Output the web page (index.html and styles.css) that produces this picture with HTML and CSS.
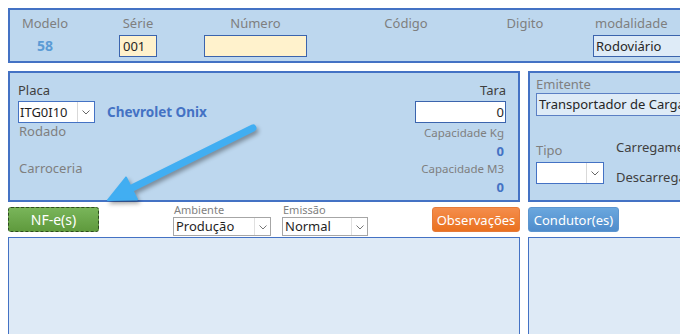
FILE: index.html
```html
<!DOCTYPE html>
<html lang="pt">
<head>
<meta charset="utf-8">
<title>MDF-e</title>
<link rel="stylesheet" href="styles.css">
</head>
<body>
<div class="page">
  <div class="panel top">
    <div class="f f-modelo"><span class="lbl">Modelo</span><span class="val58">58</span></div>
    <div class="f f-serie"><span class="lbl">Série</span><div class="box yellow w-serie">001</div></div>
    <div class="f f-numero"><span class="lbl">Número</span><div class="box yellow w-numero"></div></div>
    <div class="f f-codigo"><span class="lbl">Código</span></div>
    <div class="f f-digito"><span class="lbl">Digito</span></div>
    <div class="f f-modal"><span class="lbl lbl-modal">modalidade</span><div class="box pale w-modal">Rodoviário</div></div>
  </div>

  <div class="mid">
    <div class="panel veh">
      <div class="vleft">
        <span class="dark line">Placa</span>
        <div class="placa-row">
          <div class="sel w-placa"><span class="sel-txt">ITG0I10</span><span class="drop"><svg width="8" height="5" viewBox="0 0 8 5"><polyline points="0.5,0.5 4,4 7.5,0.5" fill="none" stroke="#666" stroke-width="1"/></svg></span></div>
          <span class="car">Chevrolet Onix</span>
        </div>
        <span class="gray line">Rodado</span>
        <span class="gray line carroceria">Carroceria</span>
      </div>
      <div class="vright">
        <span class="dark line">Tara</span>
        <div class="box white w-tara">0</div>
        <span class="gray line2 capkg">Capacidade Kg</span>
        <span class="num line2">0</span>
        <span class="gray line2">Capacidade M3</span>
        <span class="num line2">0</span>
      </div>
    </div>
    <div class="panel emit">
      <span class="gray line">Emitente</span>
      <div class="box pale w-emit">Transportador de Carga</div>
      <div class="emit-low">
        <div class="tipo">
          <span class="gray line">Tipo</span>
          <div class="sel w-tipo"><span class="sel-txt"></span><span class="drop"><svg width="8" height="5" viewBox="0 0 8 5"><polyline points="0.5,0.5 4,4 7.5,0.5" fill="none" stroke="#666" stroke-width="1"/></svg></span></div>
        </div>
        <div class="checks">
          <span class="dark line">Carregamento</span>
          <span class="dark line desc">Descarregamento</span>
        </div>
      </div>
    </div>
  </div>

  <div class="actions">
    <div class="btn green">NF-e(s)</div>
    <div class="grp g-amb">
      <span class="small">Ambiente</span>
      <div class="sel2"><span class="sel-txt">Produção</span><span class="drop2"><svg width="8" height="5" viewBox="0 0 8 5"><polyline points="0.5,0.5 4,4 7.5,0.5" fill="none" stroke="#777" stroke-width="1"/></svg></span></div>
    </div>
    <div class="grp g-emi">
      <span class="small">Emissão</span>
      <div class="sel2"><span class="sel-txt">Normal</span><span class="drop2"><svg width="8" height="5" viewBox="0 0 8 5"><polyline points="0.5,0.5 4,4 7.5,0.5" fill="none" stroke="#777" stroke-width="1"/></svg></span></div>
    </div>
    <div class="btn orange">Observações</div>
    <div class="btn blue">Condutor(es)</div>
  </div>

  <div class="bottom">
    <div class="bpanel bl"></div>
    <div class="bpanel br"></div>
  </div>
</div>

<svg class="arrow" width="680" height="334" viewBox="0 0 680 334">
  <g class="arrow-g">
    <line x1="253" y1="128" x2="133" y2="187.5" stroke="#41aef2" stroke-width="7" stroke-linecap="round"/>
    <polygon points="108,200 137,199.5 126,177.5" fill="#41aef2" stroke="#41aef2" stroke-width="2" stroke-linejoin="round"/>
  </g>
</svg>
</body>
</html>
```

FILE: styles.css
```css
html, body {
  margin: 0;
  padding: 0;
}
body {
  width: 680px;
  height: 334px;
  overflow: hidden;
  background: #ffffff;
  font-family: "Noto Sans", "Open Sans", sans-serif;
  font-size: 13px;
  color: #262626;
  position: relative;
}
.page {
  width: 800px;
  padding: 8px 0 0 8px;
  display: flex;
  flex-direction: column;
}
.panel {
  box-sizing: border-box;
  border: 2px solid #4472c4;
  background: #bdd7ee;
}

/* ---------- top panel ---------- */
.top {
  width: 760px;
  height: 55px;
  display: flex;
  padding: 5px 0 0 4px;
}
.f {
  display: flex;
  flex-direction: column;
  align-items: center;
}
.lbl {
  color: #7f7f7f;
  line-height: 16px;
  height: 16px;
  margin-bottom: 4px;
}
.f-modelo { width: 62px; }
.f-serie { width: 56px; margin-left: 34px; }
.f-numero { width: 103px; margin-left: 38px; }
.f-codigo { width: 72px; margin-left: 63px; }
.f-digito { width: 70px; margin-left: 48px; }
.f-modal { width: 130px; margin-left: 33px; align-items: flex-start; }
.lbl-modal { margin-left: 2px; }
.val58 {
  color: #5b9bd5;
  font-weight: bold;
  font-size: 14px;
  line-height: 22px;
}
.box {
  box-sizing: border-box;
  height: 22px;
  border: 1px solid #3b64ad;
  line-height: 20px;
  padding: 0 3px;
  color: #262626;
  white-space: nowrap;
  overflow: hidden;
}
.yellow { background: #fff2cc; }
.pale { background: #deebf7; padding-left: 2px; }
.white { background: #ffffff; }
.w-serie { width: 38px; }
.w-numero { width: 103px; }
.w-modal { width: 110px; }

/* ---------- middle row ---------- */
.mid {
  display: flex;
  gap: 8px;
  margin-top: 8px;
  height: 131px;
}
.veh {
  width: 512px;
  display: flex;
  justify-content: space-between;
  padding: 9px 12px 0 8px;
}
.vleft, .vright {
  display: flex;
  flex-direction: column;
}
.vright { align-items: flex-end; }
.line {
  line-height: 16px;
  height: 16px;
  white-space: nowrap;
}
.line2 {
  line-height: 18px;
  height: 18px;
  white-space: nowrap;
  margin-right: 2px;
}
.line2.gray { font-size: 11.5px; }
.capkg { margin-top: 1px; }
.dark { color: #404040; }
.gray { color: #7f7f7f; }
.num { color: #4472c4; font-weight: bold; }
.placa-row {
  display: flex;
  align-items: center;
  margin-top: 3px;
}
.sel {
  box-sizing: border-box;
  height: 22px;
  border: 1px solid #4472c4;
  background: #ffffff;
  display: flex;
  justify-content: space-between;
  align-items: stretch;
}
.sel-txt {
  line-height: 20px;
  padding-left: 1px;
  color: #1f1f1f;
  white-space: nowrap;
}
.drop {
  width: 16px;
  border-left: 1px solid #d9d9d9;
  display: flex;
  align-items: center;
  justify-content: center;
}
.w-placa { width: 77px; }
.car {
  margin-left: 12px;
  color: #4472c4;
  font-weight: bold;
  font-size: 13.5px;
}
.vleft > .gray.line { padding-left: 1px; }
.carroceria { margin-top: 21px; }
.w-tara {
  width: 91px;
  margin-top: 3px;
  text-align: right;
  padding-right: 1px;
}

.emit {
  width: 200px;
  padding: 3px 0 0 6px;
  display: flex;
  flex-direction: column;
}
.w-emit {
  width: 200px;
  height: 23px;
  margin-top: 1px;
  border-color: #5b7fc4;
}
.emit-low {
  display: flex;
  margin-top: 23px;
}
.tipo {
  display: flex;
  flex-direction: column;
  padding-top: 3px;
}
.tipo .line { margin-bottom: 4px; }
.w-tipo { width: 68px; }
.checks {
  display: flex;
  flex-direction: column;
  margin-left: 12px;
}
.desc { margin-top: 14px; }

/* ---------- actions row ---------- */
.actions {
  display: flex;
  align-items: flex-start;
  height: 35px;
}
.btn {
  box-sizing: border-box;
  height: 25px;
  margin-top: 5px;
  border-radius: 3px;
  color: #ffffff;
  display: flex;
  align-items: center;
  justify-content: center;
  white-space: nowrap;
}
.green {
  width: 91px;
  background: linear-gradient(#79b55a, #5f9a3d);
  border: 1px dashed #2d4a1e;
  font-size: 14px;
}
.orange {
  width: 88px;
  margin-left: 64px;
  background: linear-gradient(#f48d4c, #ea711f);
  border: 1px solid #e57a3a;
}
.blue {
  width: 91px;
  margin-left: 8px;
  background: linear-gradient(#6aa7de, #4f8ccb);
  border: 1px solid #5d96d0;
}
.grp {
  display: flex;
  flex-direction: column;
}
.g-amb { width: 98px; margin-left: 74px; }
.g-emi { width: 86px; margin-left: 11px; }
.small {
  font-size: 11px;
  line-height: 13px;
  color: #7f7f7f;
  margin-top: 1px;
  padding-left: 1px;
  height: 14px;
}
.sel2 {
  box-sizing: border-box;
  height: 19px;
  border: 1px solid #a6a6a6;
  background: #ffffff;
  display: flex;
  justify-content: space-between;
}
.sel2 .sel-txt {
  line-height: 17px;
  padding-left: 2px;
}
.drop2 {
  width: 16px;
  border-left: 1px solid #e0e0e0;
  display: flex;
  align-items: center;
  justify-content: center;
  padding-top: 2px;
  box-sizing: border-box;
}

/* ---------- bottom panels ---------- */
.bottom {
  display: flex;
  gap: 8px;
}
.bpanel {
  box-sizing: border-box;
  height: 110px;
  border: 1px solid #4472c4;
  background: #deeaf6;
}
.bl { width: 512px; }
.br { width: 200px; }

/* ---------- annotation arrow ---------- */
.arrow {
  position: absolute;
  left: 0;
  top: 0;
  pointer-events: none;
}
.arrow-g {
  filter: drop-shadow(2px 3px 2px rgba(0, 0, 0, 0.35));
}
```
